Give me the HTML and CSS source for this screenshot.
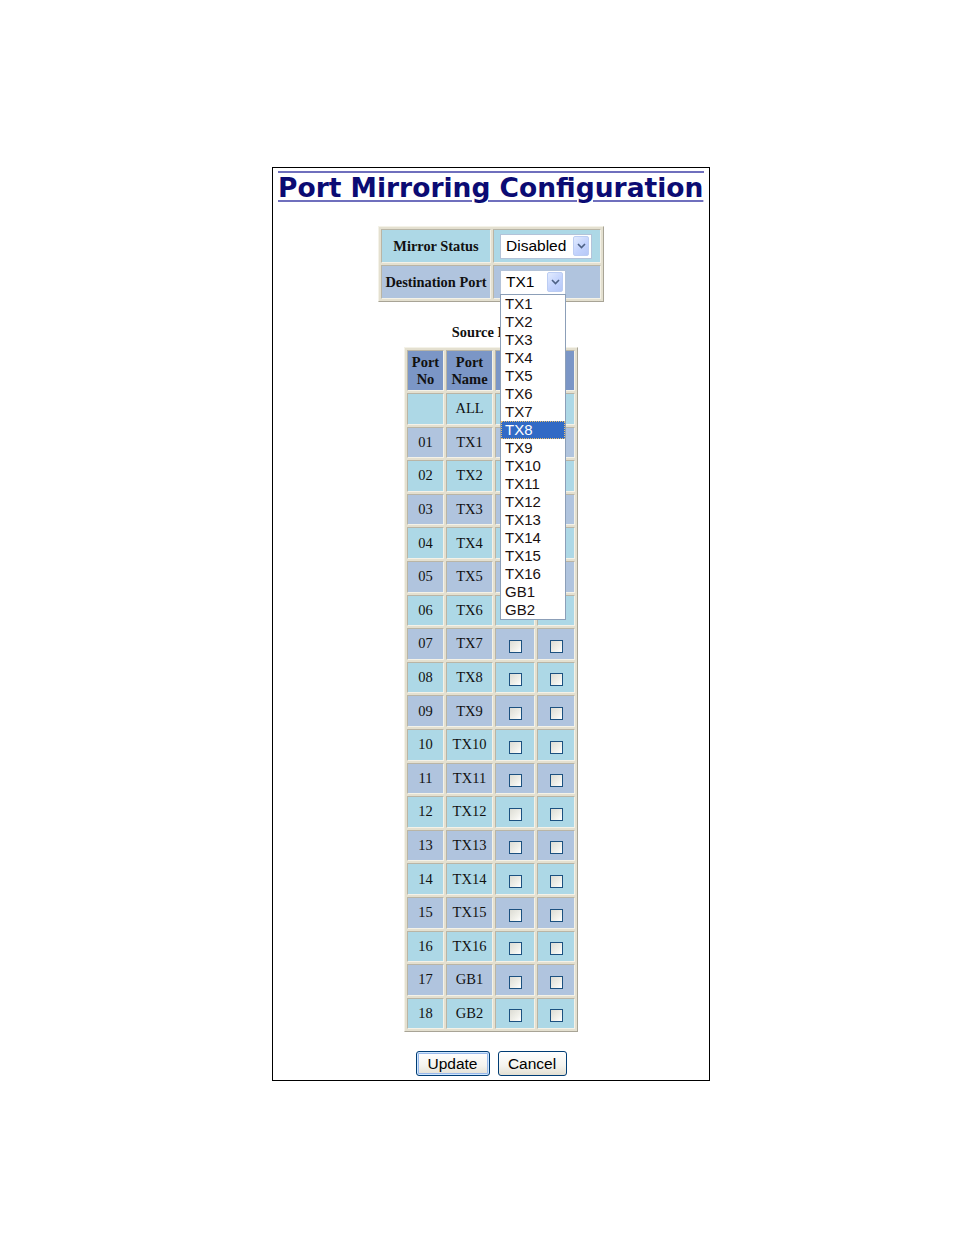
FILE: index.html
```html
<!DOCTYPE html>
<html>
<head>
<meta charset="utf-8">
<title>Port Mirroring Configuration</title>
<link rel="stylesheet" href="styles.css">
</head>
<body>
<div class="panel">
  <div class="rule"></div>
  <h1 class="title">Port Mirroring Configuration</h1>

  <table class="grid mirror">
    <tr class="r-blue">
      <td class="lbl">Mirror Status</td>
      <td class="ctl">
        <div class="sel sel-wide"><span class="sel-text">Disabled</span><span class="sel-btn"><svg width="9" height="6" viewBox="0 0 9 6"><path d="M1 1 L4.5 4.5 L8 1" fill="none" stroke="#4d6185" stroke-width="1.6"/></svg></span></div>
      </td>
    </tr>
    <tr class="r-steel">
      <td class="lbl">Destination Port</td>
      <td class="ctl">
        <div class="sel sel-narrow"><span class="sel-text">TX1</span><span class="sel-btn"><svg width="9" height="6" viewBox="0 0 9 6"><path d="M1 1 L4.5 4.5 L8 1" fill="none" stroke="#4d6185" stroke-width="1.6"/></svg></span>
          <ul class="droplist">
            <li>TX1</li><li>TX2</li><li>TX3</li><li>TX4</li><li>TX5</li><li>TX6</li><li>TX7</li>
            <li class="hl">TX8</li>
            <li>TX9</li><li>TX10</li><li>TX11</li><li>TX12</li><li>TX13</li><li>TX14</li><li>TX15</li><li>TX16</li><li>GB1</li><li>GB2</li>
          </ul>
        </div>
      </td>
    </tr>
  </table>

  <div class="source">Source Ports</div>

  <table class="grid ports">
    <colgroup><col class="c1"><col class="c2"><col class="c3"><col class="c4"></colgroup>
    <tr class="head"><th>Port<br>No</th><th>Port<br>Name</th><th></th><th></th></tr>
    <tr class="r-blue"><td></td><td>ALL</td><td><span class="cb"></span></td><td><span class="cb"></span></td></tr>
    <tr class="r-steel"><td>01</td><td>TX1</td><td><span class="cb"></span></td><td><span class="cb"></span></td></tr>
    <tr class="r-blue"><td>02</td><td>TX2</td><td><span class="cb"></span></td><td><span class="cb"></span></td></tr>
    <tr class="r-steel"><td>03</td><td>TX3</td><td><span class="cb"></span></td><td><span class="cb"></span></td></tr>
    <tr class="r-blue"><td>04</td><td>TX4</td><td><span class="cb"></span></td><td><span class="cb"></span></td></tr>
    <tr class="r-steel"><td>05</td><td>TX5</td><td><span class="cb"></span></td><td><span class="cb"></span></td></tr>
    <tr class="r-blue"><td>06</td><td>TX6</td><td><span class="cb"></span></td><td><span class="cb"></span></td></tr>
    <tr class="r-steel"><td>07</td><td>TX7</td><td><span class="cb"></span></td><td><span class="cb"></span></td></tr>
    <tr class="r-blue"><td>08</td><td>TX8</td><td><span class="cb"></span></td><td><span class="cb"></span></td></tr>
    <tr class="r-steel"><td>09</td><td>TX9</td><td><span class="cb"></span></td><td><span class="cb"></span></td></tr>
    <tr class="r-blue"><td>10</td><td>TX10</td><td><span class="cb"></span></td><td><span class="cb"></span></td></tr>
    <tr class="r-steel"><td>11</td><td>TX11</td><td><span class="cb"></span></td><td><span class="cb"></span></td></tr>
    <tr class="r-blue"><td>12</td><td>TX12</td><td><span class="cb"></span></td><td><span class="cb"></span></td></tr>
    <tr class="r-steel"><td>13</td><td>TX13</td><td><span class="cb"></span></td><td><span class="cb"></span></td></tr>
    <tr class="r-blue"><td>14</td><td>TX14</td><td><span class="cb"></span></td><td><span class="cb"></span></td></tr>
    <tr class="r-steel"><td>15</td><td>TX15</td><td><span class="cb"></span></td><td><span class="cb"></span></td></tr>
    <tr class="r-blue"><td>16</td><td>TX16</td><td><span class="cb"></span></td><td><span class="cb"></span></td></tr>
    <tr class="r-steel"><td>17</td><td>GB1</td><td><span class="cb"></span></td><td><span class="cb"></span></td></tr>
    <tr class="r-blue"><td>18</td><td>GB2</td><td><span class="cb"></span></td><td><span class="cb"></span></td></tr>
  </table>

  <div class="buttons">
    <button class="btn btn-default">Update</button>
    <button class="btn btn-cancel">Cancel</button>
  </div>
</div>
</body>
</html>
```

FILE: styles.css
```css
html, body {
  margin: 0;
  padding: 0;
  background: #ffffff;
}

.panel {
  box-sizing: border-box;
  width: 438px;
  margin: 167px 0 0 272px;
  border: 1px solid #000000;
  padding: 3px 5px 4px 5px;
  font-family: "Liberation Serif", "Times New Roman", serif;
}

.rule {
  height: 2px;
  background: #6f6fbd;
}

.title {
  margin: 0;
  font-family: "DejaVu Sans", Verdana, sans-serif;
  font-weight: bold;
  font-size: 26.5px;
  line-height: 30px;
  color: #0b0b73;
  text-decoration: underline;
  text-decoration-color: #6f6fbd;
  text-decoration-thickness: 2px;
  text-underline-offset: 3px;
  white-space: nowrap;
}

.grid {
  border-collapse: separate;
  border-spacing: 2px;
  border: 1px solid;
  border-color: #f4f2e8 #a8a496 #a8a496 #f4f2e8;
  background: #e4e0d0;
  margin: 0 auto;
}

.grid td, .grid th {
  border: 1px solid;
  border-color: #b9b5a6 #f4f2e8 #f4f2e8 #b9b5a6;
  padding: 0;
}

.r-blue td { background: #add8e6; }
.r-steel td { background: #b0c4de; }

/* Mirror table */
.mirror {
  margin-top: 23px;
}
.mirror td {
  height: 32px;
}
.mirror .lbl {
  width: 108px;
  text-align: center;
  font-weight: bold;
  font-size: 14.4px;
  color: #111;
}
.mirror .ctl {
  width: 100px;
  padding-left: 6px;
  vertical-align: middle;
}

.sel {
  position: relative;
  box-sizing: border-box;
  height: 25px;
  background: #ffffff;
  border: 1px solid #b3c3d9;
  font-family: "Liberation Sans", Arial, sans-serif;
  font-size: 15.5px;
  color: #000;
  display: flex;
  align-items: center;
}
.sel-wide { width: 92px; }
.sel-narrow { width: 66px; }

.sel-text {
  flex: 1;
  padding-left: 5px;
  line-height: 20px;
}
.sel-btn {
  box-sizing: border-box;
  width: 16px;
  height: 20px;
  margin-right: 2px;
  border: 1px solid #bccdf3;
  border-radius: 2px;
  background: linear-gradient(135deg, #e2ebfe 0%, #c3d3fd 55%, #b6c8f7 100%);
  display: flex;
  align-items: center;
  justify-content: center;
}

.droplist {
  position: absolute;
  left: -1px;
  top: 23px;
  width: 66px;
  box-sizing: border-box;
  margin: 0;
  padding: 0;
  list-style: none;
  background: #ffffff;
  border: 1px solid #8c9fb8;
  z-index: 10;
  font-size: 15px;
}
.droplist li {
  box-sizing: border-box;
  height: 18px;
  line-height: 18px;
  padding-left: 4px;
  color: #1a1010;
}
.droplist li.hl {
  background: #316ac5;
  color: #ffffff;
  outline: 1px dotted #e8c070;
  outline-offset: -1px;
}

.source {
  margin-top: 21px;
  text-align: center;
  font-weight: bold;
  font-size: 14.4px;
  line-height: 18px;
  color: #111;
}

/* Ports table */
.ports {
  margin-top: 6px;
  table-layout: fixed;
  font-size: 14.5px;
}
.ports .c1 { width: 37px; }
.ports .c2 { width: 47px; }
.ports .c3 { width: 40px; }
.ports .c4 { width: 38px; }

.ports th {
  background: #7b96c6;
  height: 38px;
  padding-top: 1px;
  font-weight: bold;
  line-height: 17px;
  color: #111;
  text-align: center;
}
.ports td {
  height: 29.6px;
  text-align: center;
  vertical-align: middle;
  color: #111;
}

.cb {
  display: inline-block;
  box-sizing: border-box;
  width: 13px;
  height: 13px;
  border: 1px solid #1c5180;
  background: linear-gradient(135deg, #dcdcd4 0%, #f0f0ea 60%, #ffffff 100%);
  vertical-align: middle;
  margin-top: 3px;
}

.buttons {
  margin-top: 19px;
  display: flex;
  justify-content: center;
  gap: 8px;
}
.btn {
  box-sizing: border-box;
  height: 25px;
  padding: 0;
  border: 1px solid #003c74;
  border-radius: 3px;
  background: linear-gradient(180deg, #ffffff 0%, #f4f3ee 60%, #e2dfd2 100%);
  font-family: "Liberation Sans", Arial, sans-serif;
  font-size: 15.5px;
  color: #000;
  line-height: 21px;
}
.btn-default {
  width: 74px;
  box-shadow: inset 0 0 0 1px #cee7ff, inset 0 0 0 2px #98b8ea;
}
.btn-cancel {
  width: 69px;
}
```
